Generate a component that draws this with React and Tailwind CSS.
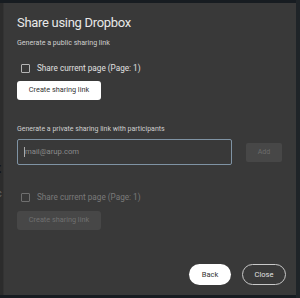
export default function App() {
  return (
    <div className="w-[300px] h-[298px] bg-[#171c21] overflow-hidden flex" style={{ fontFamily: "Roboto, 'Liberation Sans', sans-serif" }}>
      <div className="w-[4px] h-[292px] bg-[#2c2c2c] mt-[3px] border-r border-[#333] flex flex-col overflow-hidden">
        <div className="mt-[157px] ml-[-4px] text-[15px] leading-[16px] font-bold text-[#111]">t</div>
        <div className="mt-[12px] ml-[-4px] text-[11px] leading-[12px] text-[#666]">c</div>
      </div>
      <div className="w-[292px] h-[292px] mt-[3px] bg-[#393939] flex flex-col pl-[13px] pr-[14px]">
        <div className="text-[13px] tracking-[-0.3px] leading-[20px] text-[#e8e8e8] mt-[10px]">Share using Dropbox</div>
        <div className="text-[7.1px] leading-[12px] text-[#cfcfcf] mt-[4px]">Generate a public sharing link</div>
        <div className="flex items-center mt-[13px] ml-[4px] h-[12px]">
          <div className="w-[9px] h-[9px] border border-[#b5b5b5] rounded-[1px]" />
          <span className="ml-[7px] text-[8.2px] text-[#e0e0e0]">Share current page (Page: 1)</span>
        </div>
        <div className="mt-[7px] w-[84px] h-[19px] bg-white rounded-[3px] flex items-center justify-center text-[7.3px] text-[#333]">Create sharing link</div>
        <div className="text-[7px] leading-[12px] text-[#cfcfcf] mt-[23px]">Generate a private sharing link with participants</div>
        <div className="flex mt-[4px] items-center">
          <div className="w-[215px] h-[26px] border-[1.5px] border-[#7f93a4] rounded-[2px] flex items-center pl-[6px]">
            <div className="w-[1px] h-[10px] bg-[#aaa]" />
            <span className="text-[7.7px] text-[#8a8a8a]">mail@arup.com</span>
          </div>
          <div className="ml-[14px] w-[36px] h-[19px] bg-[#474747] rounded-[2px] flex items-center justify-center text-[7px] text-[#6c6c6c]">Add</div>
        </div>
        <div className="flex items-center mt-[26px] ml-[4px] h-[12px]">
          <div className="w-[9px] h-[9px] border border-[#6f6f6f] rounded-[1px]" />
          <span className="ml-[7px] text-[8.2px] text-[#7a7a7a]">Share current page (Page: 1)</span>
        </div>
        <div className="mt-[8px] w-[84px] h-[19px] bg-[#474747] rounded-[3px] flex items-center justify-center text-[7.3px] text-[#707070]">Create sharing link</div>
        <div className="flex justify-end mt-auto mb-[10px] gap-[11px]">
          <div className="w-[42px] h-[21px] bg-white rounded-full flex items-center justify-center text-[7.5px] text-[#333]">Back</div>
          <div className="w-[44px] h-[21px] border border-[#c8c8c8] rounded-full flex items-center justify-center text-[7.5px] text-[#e0e0e0] mr-[-4px]">Close</div>
        </div>
      </div>
      <div className="flex-1 h-full bg-[#1f2428]" />
    </div>
  );
}
